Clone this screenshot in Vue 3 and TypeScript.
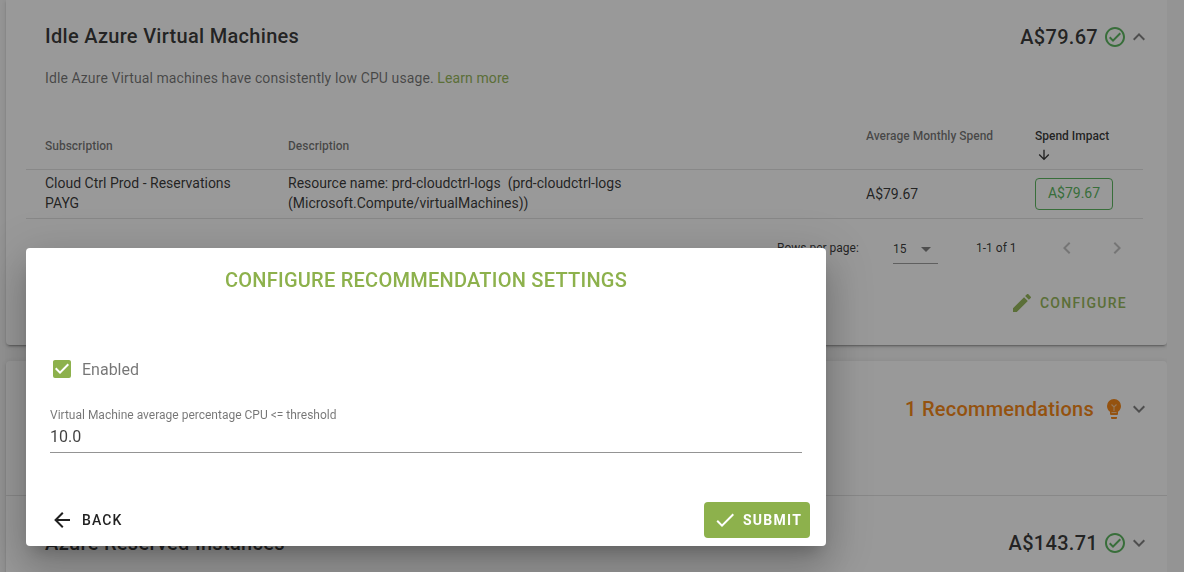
<script setup lang="ts">
const icons = {
  check: 'M12 2C6.5 2 2 6.5 2 12S6.5 22 12 22 22 17.5 22 12 17.5 2 12 2M12 20C7.59 20 4 16.41 4 12S7.59 4 12 4 20 7.59 20 12 16.41 20 12 20M16.59 7.58L10 14.17L7.41 11.59L6 13L10 17L18 9L16.59 7.58Z',
  up: 'M7.41,15.41L12,10.83L16.59,15.41L18,14L12,8L6,14L7.41,15.41Z',
  down: 'M7.41,8.58L12,13.17L16.59,8.58L18,10L12,16L6,10L7.41,8.58Z',
  arrowDown: 'M11,4H13V16L18.5,10.5L19.92,11.92L12,19.84L4.08,11.92L5.5,10.5L11,16V4Z',
  arrowLeft: 'M20,11V13H8L13.5,18.5L12.08,19.92L4.16,12L12.08,4.08L13.5,5.5L8,11H20Z',
  menuDown: 'M7,10L12,15L17,10H7Z',
  left: 'M15.41,16.58L10.83,12L15.41,7.41L14,6L8,12L14,18L15.41,16.58Z',
  right: 'M8.59,16.58L13.17,12L8.59,7.41L10,6L16,12L10,18L8.59,16.58Z',
  pencil: 'M20.71,7.04C21.1,6.65 21.1,6 20.71,5.63L18.37,3.29C18,2.9 17.35,2.9 16.96,3.29L15.12,5.12L18.87,8.87M3,17.25V21H6.75L17.81,9.93L14.06,6.18L3,17.25Z',
  tick: 'M21,7L9,19L3.5,13.5L4.91,12.09L9,16.17L19.59,5.59L21,7Z',
  box: 'M10,17L5,12L6.41,10.58L10,14.17L17.59,6.58L19,8M19,3H5C3.89,3 3,3.89 3,5V19A2,2 0 0,0 5,21H19A2,2 0 0,0 21,19V5C21,3.89 20.1,3 19,3Z',
  bulb: 'M12,2A7,7 0 0,0 5,9C5,11.38 6.19,13.47 8,14.74V17A1,1 0 0,0 9,18H15A1,1 0 0,0 16,17V14.74C17.81,13.47 19,11.38 19,9A7,7 0 0,0 12,2M9,21A1,1 0 0,0 10,22H14A1,1 0 0,0 15,21V20H9V21Z',
}
</script>

<template>
  <div class="page">
    <section class="card first">
      <header class="head">
        <h2 class="title">Idle Azure Virtual Machines</h2>
        <div class="side">
          <span class="amount">A$79.67</span>
          <svg class="ic24 green" viewBox="0 0 24 24"><path :d="icons.check" /></svg>
          <svg class="ic24 chev" viewBox="0 0 24 24"><path :d="icons.up" /></svg>
        </div>
      </header>
      <p class="desc">Idle Azure Virtual machines have consistently low CPU usage. <a class="link">Learn more</a></p>
      <div class="table">
        <div class="row heads">
          <div class="th">Subscription</div>
          <div class="th">Description</div>
          <div class="th top">Average Monthly Spend</div>
          <div class="th top active">
            Spend Impact
            <svg class="sort" viewBox="0 0 24 24"><path :d="icons.arrowDown" /></svg>
          </div>
        </div>
        <div class="row body">
          <div class="subCell">Cloud Ctrl Prod - Reservations PAYG</div>
          <div class="descCell">Resource name: prd-cloudctrl-logs&nbsp; (prd-cloudctrl-logs (Microsoft.Compute/virtualMachines))</div>
          <div>A$79.67</div>
          <div><span class="chip">A$79.67</span></div>
        </div>
      </div>
      <div class="pager">
        <span class="rows">Rows per page:</span>
        <span class="select">15<svg class="caret" viewBox="0 0 24 24"><path :d="icons.menuDown" /></svg></span>
        <span class="range">1-1 of 1</span>
        <svg class="ic24 pg" viewBox="0 0 24 24"><path :d="icons.left" /></svg>
        <svg class="ic24 pg" viewBox="0 0 24 24"><path :d="icons.right" /></svg>
      </div>
      <div class="actions">
        <span class="configure">
          <svg class="ic24" viewBox="0 0 24 24"><path :d="icons.pencil" /></svg>
          CONFIGURE
        </span>
      </div>
    </section>

    <section class="card second">
      <div class="panel rec">
        <div class="side">
          <span class="amount orange">1 Recommendations</span>
          <svg class="ic24 bulb" viewBox="0 0 24 24">
            <path :d="icons.bulb" />
            <path class="filament" d="M9.5 7.5 12 10 14.5 7.5M12 10V14M9.5 15.5H14.5" />
          </svg>
          <svg class="ic24 chev tight" viewBox="0 0 24 24"><path :d="icons.down" /></svg>
        </div>
      </div>
      <div class="panel last">
        <h2 class="title">Azure Reserved Instances</h2>
        <div class="side">
          <span class="amount">A$143.71</span>
          <svg class="ic24 green" viewBox="0 0 24 24"><path :d="icons.check" /></svg>
          <svg class="ic24 chev" viewBox="0 0 24 24"><path :d="icons.down" /></svg>
        </div>
      </div>
    </section>

    <div class="scrim"></div>

    <div class="dialog">
      <h3 class="dlgTitle">CONFIGURE RECOMMENDATION SETTINGS</h3>
      <div class="check">
        <svg class="box" viewBox="0 0 24 24"><path :d="icons.box" /></svg>
        <span>Enabled</span>
      </div>
      <div class="field">
        <label>Virtual Machine average percentage CPU &lt;= threshold</label>
        <div class="value">10.0</div>
      </div>
      <div class="dlgActions">
        <span class="back">
          <svg class="ic24" viewBox="0 0 24 24"><path :d="icons.arrowLeft" /></svg>
          BACK
        </span>
        <span class="submit">
          <svg class="ic24" viewBox="0 0 24 24"><path :d="icons.tick" /></svg>
          SUBMIT
        </span>
      </div>
    </div>
  </div>
</template>

<style>
html, body { margin: 0; height: 100%; overflow: hidden; background: #f5f5f5; }
</style>

<style scoped>
.page {
  position: relative;
  height: 572px;
  overflow: hidden;
  padding-left: 6px;
  width: 1161px;
  font-family: Roboto, "Liberation Sans", sans-serif;
  color: rgba(0, 0, 0, 0.87);
}
svg { fill: currentColor; display: block; flex: none; }
.ic24 { width: 24px; height: 24px; }
.card {
  background: #fff;
  border-radius: 4px;
  width: 1161px;
  box-shadow: 0 3px 1px -2px rgba(0,0,0,.2), 0 2px 2px 0 rgba(0,0,0,.14), 0 1px 5px 0 rgba(0,0,0,.12);
}
.first { height: 345px; padding: 0 16px 0 20px; box-sizing: border-box; border-radius: 0 0 4px 4px; }
.second { margin-top: 16px; height: 240px; }
.head { display: flex; justify-content: space-between; align-items: center; padding: 22px 0 0 19px; height: 29px; }
.title { margin: 0; font-size: 20px; font-weight: 500; line-height: 29px; letter-spacing: 0.3px; }
.side { display: flex; align-items: center; }
.amount { font-size: 20px; font-weight: 500; letter-spacing: 0.3px; line-height: 28px; }
.green { color: #4caf50; margin-left: 5px; }
.chev { color: rgba(0,0,0,.54); }
.tight { margin-left: 1px; }
.desc { margin: 16px 0 0 19px; font-size: 14px; line-height: 22px; letter-spacing: 0.1px; color: rgba(0,0,0,.6); }
.link { color: #8db14c; }
.table { margin-top: 35px; width: 1117px; }
.row { display: grid; grid-template-columns: 262px 578px 169px 108px; }
.row > div:first-child { padding-left: 19px; }
.heads { height: 46px; border-bottom: 1px solid rgba(0,0,0,.12); align-items: center; box-sizing: border-box; }
.th { font-size: 12px; font-weight: 500; line-height: 16px; color: rgba(0,0,0,.6); position: relative; top: -1px; }
.th.top { align-self: start; padding-top: 4px; top: 0; }
.th.active { color: rgba(0,0,0,.87); }
.sort { width: 16px; height: 16px; margin: 3px 0 0 1px; }
.body { height: 49px; box-sizing: border-box; border-bottom: 1px solid rgba(0,0,0,.12); align-items: center; font-size: 14px; line-height: 20px; }
.row > .subCell { width: 200px; box-sizing: content-box; padding-bottom: 2px; }
.descCell { width: 370px; padding-bottom: 2px; }
.chip {
  display: block;
  width: 78px;
  height: 32px;
  box-sizing: border-box;
  border: 1px solid #4caf50;
  border-radius: 4px;
  color: #4caf50;
  text-align: center;
  line-height: 28px;
}
.pager { display: flex; align-items: center; height: 58px; font-size: 12px; margin-left: 751px; }
.pager > * { flex: none; }
.rows { width: 116px; }
.select { width: 45px; height: 28px; margin-top: 3px; line-height: 26px; border-bottom: 1px solid rgba(0,0,0,.42); display: flex; align-items: center; position: relative; }
.caret { width: 24px; height: 24px; position: absolute; left: 21px; top: 2px; color: rgba(0,0,0,.54); }
.range { margin-left: 38px; width: 79px; }
.pg { color: rgba(0,0,0,.26); }
.pg + .pg { margin-left: 26px; }
.actions { display: flex; justify-content: flex-end; margin-top: 14px; padding-right: 24px; }
.configure { display: flex; align-items: center; gap: 6px; color: #8db14c; font-size: 14px; font-weight: 500; letter-spacing: 1.25px; height: 24px; }
.panel { display: flex; justify-content: space-between; align-items: center; box-sizing: border-box; padding: 0 16px 0 39px; }
.rec { height: 135px; justify-content: flex-end; align-items: flex-start; padding-top: 34px; border-bottom: 1px solid rgba(0,0,0,.12); }
.last { height: 94px; }
.orange { color: #f57c00; letter-spacing: 0.25px; }
.bulb { color: #f57c00; margin-left: 8px; }
.filament { fill: none; stroke: #fff; stroke-width: 1.1; opacity: .55; }
.scrim { position: fixed; inset: 0; background: rgba(33,33,33,.46); }
.dialog {
  position: absolute;
  left: 26px;
  top: 248px;
  width: 800px;
  height: 298px;
  box-sizing: border-box;
  background: #fff;
  border-radius: 4px;
  padding: 0 24px 8px;
  display: flex;
  flex-direction: column;
  box-shadow: 0 11px 15px -7px rgba(0,0,0,.2), 0 24px 38px 3px rgba(0,0,0,.14), 0 9px 46px 8px rgba(0,0,0,.12);
}
.dlgTitle { margin: 20px 0 0; text-align: center; font-size: 20px; line-height: 25px; font-weight: 500; color: #8db14c; letter-spacing: 0.25px; }
.check { display: flex; align-items: center; gap: 8px; margin: 64px 0 0; color: rgba(0,0,0,.54); font-size: 16px; height: 24px; }
.box { width: 24px; height: 24px; color: #8db14c; }
.field { margin-top: 27px; }
.field label { display: block; font-size: 12px; line-height: 15px; color: rgba(0,0,0,.54); }
.value { font-size: 16px; line-height: 24px; height: 30px; padding-top: 2px; border-bottom: 1px solid rgba(0,0,0,.42); box-sizing: border-box; color: rgba(0,0,0,.75); }
.dlgActions { display: flex; justify-content: space-between; align-items: center; margin-top: auto; margin-right: -8px; }
.back { display: flex; align-items: center; gap: 8px; font-size: 14px; font-weight: 500; letter-spacing: 1.15px; }
.submit { display: flex; align-items: center; gap: 6px; background: #8db14c; color: #fff; border-radius: 4px; height: 36px; width: 106px; padding-left: 9px; box-sizing: border-box; font-size: 14px; font-weight: 700; letter-spacing: 1.25px; }
</style>
